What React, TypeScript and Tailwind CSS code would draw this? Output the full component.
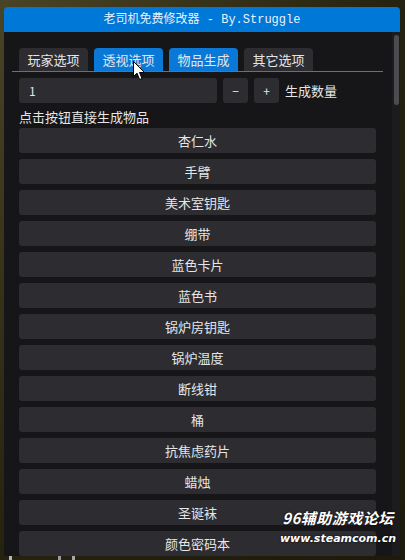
const items = [
  '杏仁水',
  '手臂',
  '美术室钥匙',
  '绷带',
  '蓝色卡片',
  '蓝色书',
  '锅炉房钥匙',
  '锅炉温度',
  '断线钳',
  '桶',
  '抗焦虑药片',
  '蜡烛',
  '圣诞袜',
  '颜色密码本',
];

const tabs = [
  { label: '玩家选项', active: false },
  { label: '透视选项', active: true },
  { label: '物品生成', active: true },
  { label: '其它选项', active: false },
];

const cjk = { fontFamily: '"Noto Sans CJK SC", "Noto Sans", sans-serif' };

export default function App() {
  return (
    <div
      className="relative w-[405px] h-[560px] overflow-hidden bg-gradient-to-br from-[#4a4426] via-[#25220f] to-[#1d1a0b]"
      style={cjk}
    >
      <div className="ml-[4px] mt-[7px] w-[396px] h-[549px] flex flex-col rounded-t-[4px] overflow-hidden">
        {/* title */}
        <div
          className="h-[25px] shrink-0 bg-[#0078d7] flex items-center justify-center text-[12px] text-[#e8f1fb]"
          style={{ fontFamily: '"Liberation Mono", "Noto Sans CJK SC", monospace' }}
        >
          老司机免费修改器 - By.Struggle
        </div>

        <div className="flex-1 flex bg-[#161618]">
          <div className="flex-1 pl-[15px] pr-[16px] pt-[16px] flex flex-col">
            {/* tabs */}
            <div className="flex gap-[6px]">
              {tabs.map((t) => (
                <div
                  key={t.label}
                  className={
                    'w-[69px] h-[23px] rounded-t-[4px] flex items-center justify-center text-[13px] text-[#e6e6e6] ' +
                    (t.active ? 'bg-[#0a78d7]' : 'bg-[#2c2c31]')
                  }
                >
                  {t.label}
                </div>
              ))}
            </div>
            <div className="-mx-[7px] h-px bg-[#2a7fd0]" />

            {/* count row */}
            <div className="mt-[6px] flex items-center h-[25px]">
              <div className="w-[198px] h-[25px] rounded-[3px] bg-[#2c2c31] flex items-center pl-[10px] text-[12px] text-[#e6e6e6]">
                1
              </div>
              <div className="ml-[6px] w-[25px] h-[25px] rounded-[3px] bg-[#2c2c31] flex items-center justify-center text-[12px] text-[#e6e6e6]">
                −
              </div>
              <div className="ml-[6px] w-[25px] h-[25px] rounded-[3px] bg-[#2c2c31] flex items-center justify-center text-[12px] text-[#e6e6e6]">
                +
              </div>
              <span className="ml-[6px] text-[13px] text-[#e6e6e6]">生成数量</span>
            </div>

            <div className="mt-[3px] h-[22px] flex items-center text-[13px] text-[#e6e6e6]">
              点击按钮直接生成物品
            </div>

            <div className="flex flex-col gap-[6px]">
              {items.map((it) => (
                <div
                  key={it}
                  className="h-[25px] shrink-0 rounded-[3px] bg-[#2c2c31] flex items-center justify-center text-[13px] text-[#e6e6e6]"
                >
                  {it}
                </div>
              ))}
            </div>
          </div>

          {/* scrollbar */}
          <div className="w-[8px] bg-[#1c1c1f] pt-[3px] pl-[2px]">
            <div className="w-[5px] h-[70px] rounded-full bg-[#4b4b50]" />
          </div>
        </div>
      </div>

      {/* background marks below the window */}
      <div className="absolute left-[9px] top-[556px] w-[3px] h-[4px] bg-[#b8b8b8]" />
      <div className="absolute left-[58px] top-[556px] w-[3px] h-[4px] bg-[#9a9a9a]" />
      <div className="absolute left-[72px] top-[556px] w-[3px] h-[4px] bg-[#a8a8a8]" />

      {/* watermark */}
      <div className="absolute left-[279px] top-[508px] w-[118px] flex flex-col items-center text-white italic font-bold [text-shadow:0_0_2px_#000]">
        <span className="text-[15px] leading-[20px] tracking-[0.5px]">96辅助游戏论坛</span>
        <span
          className="text-[11px] leading-[16px] mt-[3px]"
          style={{ fontFamily: '"DejaVu Sans", sans-serif' }}
        >
          www.steamcom.cn
        </span>
      </div>

      {/* mouse cursor */}
      <svg className="absolute left-[133px] top-[61px]" width="13" height="20" viewBox="0 0 13 20">
        <path
          d="M0.5 0.5 L0.5 15.5 L4 12.2 L6.6 18.5 L9 17.5 L6.5 11.5 L11.5 11.5 Z"
          fill="#ffffff"
          stroke="#000000"
          strokeWidth="1"
          strokeLinejoin="miter"
        />
      </svg>
    </div>
  );
}
